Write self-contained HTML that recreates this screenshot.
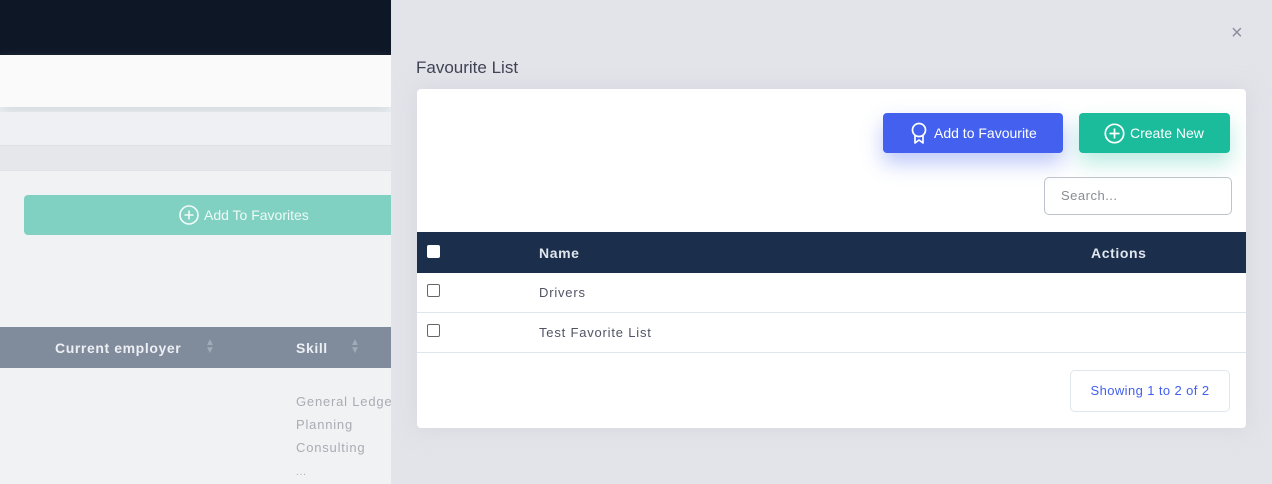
<!DOCTYPE html>
<html><head><style>
*{margin:0;padding:0;box-sizing:border-box}
body{width:1272px;height:484px;overflow:hidden;position:relative;font-family:"Liberation Sans",sans-serif;background:#f1f2f4}
.a{position:absolute}
</style></head><body>
<div class="a" style="left:0;top:0;width:391px;height:55px;background:#0e1726"></div>
<div class="a" style="left:0;top:55px;width:391px;height:52px;background:#fafafa;box-shadow:0 8px 14px rgba(180,195,205,.45)"></div>
<div class="a" style="left:0;top:112px;width:391px;height:33px;background:#eff0f3"></div>
<div class="a" style="left:0;top:145px;width:391px;height:26px;background:#e6e7eb;border-top:1px solid #e0e1e5;border-bottom:1px solid #e0e1e5"></div>
<div class="a" style="left:24px;top:195px;width:367px;height:40px;background:#80d1c2;border-radius:4px 0 0 4px;color:#eefaf7;font-size:14px;line-height:40px;padding-left:155px">
<svg style="position:absolute;left:155px;top:10px" width="20" height="20" viewBox="0 0 20 20"><circle cx="10" cy="10" r="9" fill="none" stroke="#f2fbf9" stroke-width="1.6"/><path d="M10 5.5v9M5.5 10h9" stroke="#f2fbf9" stroke-width="1.6"/></svg>
<span style="margin-left:25px">Add To Favorites</span></div>
<div class="a" style="left:0;top:327px;width:391px;height:41px;background:#808b9b;color:#eceff3;font-weight:bold;font-size:14px;letter-spacing:.6px">
<span class="a" style="left:55px;top:13px">Current employer</span><span class="a" style="left:205px;top:12px;color:#a2abb8;font-size:10px;line-height:8px">▲<br>▼</span>
<span class="a" style="left:296px;top:13px">Skill</span><span class="a" style="left:350px;top:12px;color:#a2abb8;font-size:10px;line-height:8px">▲<br>▼</span></div>
<div class="a" style="left:296px;top:390px;color:#a9acb3;font-size:13px;letter-spacing:.8px;line-height:23px;white-space:nowrap;width:95px;overflow:hidden">General Ledger<br>Planning<br>Consulting<br><span style="font-size:10px">...</span></div>

<div class="a" style="left:391px;top:0;width:881px;height:484px;background:#e3e4ea"></div>
<div class="a" style="left:1231px;top:23px;color:#8b8e9c;font-size:20px;line-height:20px">×</div>
<div class="a" style="left:416px;top:58px;color:#3f4253;font-size:17px">Favourite List</div>
<div class="a" style="left:417px;top:89px;width:829px;height:339px;background:#fff;border-radius:4px;box-shadow:0 0 20px rgba(200,202,212,.5);overflow:hidden">
 <div class="a" style="left:466px;top:24px;width:180px;height:40px;background:#4361ee;border-radius:4px;color:#fff;font-size:14px;line-height:40px;box-shadow:0 10px 20px rgba(67,97,238,.35)">
  <svg style="position:absolute;left:27px;top:9px" width="18" height="23" viewBox="0 0 18 23"><circle cx="9" cy="8" r="6.5" fill="none" stroke="#fff" stroke-width="1.7"/><path d="M5 13.5L5 21l4-3 4 3v-7.5" fill="none" stroke="#fff" stroke-width="1.7" stroke-linejoin="round"/></svg>
  <span style="position:absolute;left:51px">Add to Favourite</span></div>
 <div class="a" style="left:662px;top:24px;width:151px;height:40px;background:#1abc9c;border-radius:4px;color:#fff;font-size:14px;line-height:40px;box-shadow:0 10px 20px rgba(26,188,156,.3)">
  <svg style="position:absolute;left:25px;top:10px" width="21" height="21" viewBox="0 0 21 21"><circle cx="10.5" cy="10.5" r="9.2" fill="none" stroke="#fff" stroke-width="1.7"/><path d="M10.5 5.5v10M5.5 10.5h10" stroke="#fff" stroke-width="1.7"/></svg>
  <span style="position:absolute;left:51px">Create New</span></div>
 <div class="a" style="left:627px;top:88px;width:188px;height:38px;border:1px solid #bfc4cc;border-radius:5px;color:#888c93;font-size:13px;line-height:36px;padding-left:16px;letter-spacing:.5px">Search...</div>
 <div class="a" style="left:0;top:143px;width:829px;height:41px;background:#1b2e4b;color:#e0e6ed;font-weight:bold;font-size:14px;letter-spacing:.6px">
  <div class="a" style="left:10px;top:13px;width:13px;height:13px;background:#fff;border-radius:2px"></div>
  <span class="a" style="left:122px;top:13px">Name</span><span class="a" style="left:674px;top:13px">Actions</span></div>
 <div class="a" style="left:0;top:184px;width:829px;height:40px;border-bottom:1px solid #e0e6ed"></div>
 <div class="a" style="left:0;top:224px;width:829px;height:40px;border-bottom:1px solid #e0e6ed"></div>
 <div class="a" style="left:10px;top:195px;width:13px;height:13px;border:1px solid #666;border-radius:2px"></div>
 <div class="a" style="left:10px;top:235px;width:13px;height:13px;border:1px solid #666;border-radius:2px"></div>
 <span class="a" style="left:122px;top:196px;color:#515365;font-size:13px;letter-spacing:.8px">Drivers</span>
 <span class="a" style="left:122px;top:236px;color:#515365;font-size:13px;letter-spacing:.8px">Test Favorite List</span>
 <div class="a" style="left:653px;top:281px;width:160px;height:42px;border:1px solid #e0e6ed;border-radius:5px;color:#4361ee;font-size:13px;line-height:40px;text-align:center;letter-spacing:.4px">Showing 1 to 2 of 2</div>
</div>
</body></html>
